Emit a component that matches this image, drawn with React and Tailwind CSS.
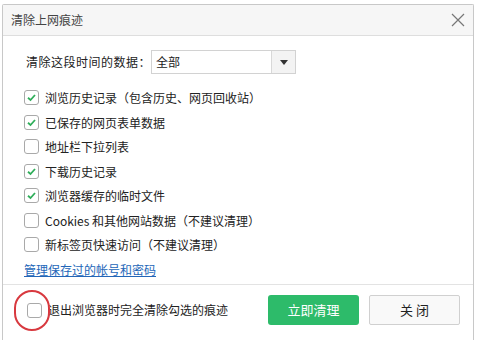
const items = [
  { label: "浏览历史记录（包含历史、网页回收站）", checked: true },
  { label: "已保存的网页表单数据", checked: true },
  { label: "地址栏下拉列表", checked: false },
  { label: "下载历史记录", checked: true },
  { label: "浏览器缓存的临时文件", checked: true },
  { label: "Cookies 和其他网站数据（不建议清理）", checked: false },
  { label: "新标签页快速访问（不建议清理）", checked: false },
];

function Box({ checked }) {
  return (
    <span className="w-[15px] h-[15px] rounded-[3px] border border-[#a9a9a9] bg-white flex items-center justify-center shrink-0">
      {checked && (
        <svg width="11" height="11" viewBox="0 0 11 11">
          <path d="M2 5.8 L4.5 8 L9 3" fill="none" stroke="#2fae5a" strokeWidth="1.8" />
        </svg>
      )}
    </span>
  );
}

export default function App() {
  return (
    <div
      className="w-[477px] h-[340px] bg-white pt-[4px] pl-[2px] pr-[3px] overflow-hidden"
      style={{ fontFamily: '"Noto Sans CJK SC", "Noto Sans", sans-serif' }}
    >
      <div className="h-[336px] border border-b-0 border-[#c8c8c8] rounded-t-[2px] flex flex-col text-[#222] text-[12px]">
        <div className="h-[31px] bg-[#f6f6f6] border-b border-[#dedede] flex items-center justify-between pl-[8px] pr-[8px]">
          <span className="text-[#444] text-[12px]">清除上网痕迹</span>
          <svg width="14" height="14" viewBox="0 0 14 14">
            <path d="M1 1 L13 13 M13 1 L1 13" stroke="#777" strokeWidth="1.2" />
          </svg>
        </div>

        <div className="flex items-center pl-[23px] mt-[14px]">
          <span className="w-[125px] whitespace-nowrap tracking-[0.5px]">清除这段时间的数据：</span>
          <div className="w-[145px] h-[24px] border border-[#d2d2d2] flex">
            <span className="flex-1 pl-[4px] leading-[22px]">全部</span>
            <span className="w-[24px] border-l border-[#d8d8d8] bg-[#f3f3f3] flex items-center justify-center">
              <svg width="8" height="5" viewBox="0 0 8 5">
                <path d="M0 0 L8 0 L4 5 Z" fill="#333" />
              </svg>
            </span>
          </div>
        </div>

        <div className="flex flex-col pl-[21px] mt-[16px] gap-[9.5px]">
          {items.map((it) => (
            <div key={it.label} className="flex items-center gap-[6px] h-[15px]">
              <Box checked={it.checked} />
              <span className="leading-[15px]">{it.label}</span>
            </div>
          ))}
        </div>

        <a className="ml-[21px] mt-[9px] text-[#2366b8] underline leading-[17px] w-fit">
          管理保存过的帐号和密码
        </a>

        <div className="mt-[6px] border-t border-[#e3e3e3] flex items-center pl-[24px] pr-[13px] pt-[10px]">
          <div className="relative flex items-center">
            <Box checked={false} />
            <span className="absolute left-[-13px] top-[-13px] w-[36px] h-[41px] rounded-full border-[2px] border-[#d8393f]"></span>
          </div>
          <span className="ml-[6px]">退出浏览器时完全清除勾选的痕迹</span>
          <div className="flex-1" />
          <button className="w-[91px] h-[30px] rounded-[3px] bg-[#2dbb6a] text-white text-[13px]">
            立即清理
          </button>
          <button className="ml-[10px] w-[91px] h-[30px] rounded-[2px] border border-[#d0d0d0] bg-[#f9f9f9] text-[#222] text-[13px]">
            关 闭
          </button>
        </div>
      </div>
    </div>
  );
}
